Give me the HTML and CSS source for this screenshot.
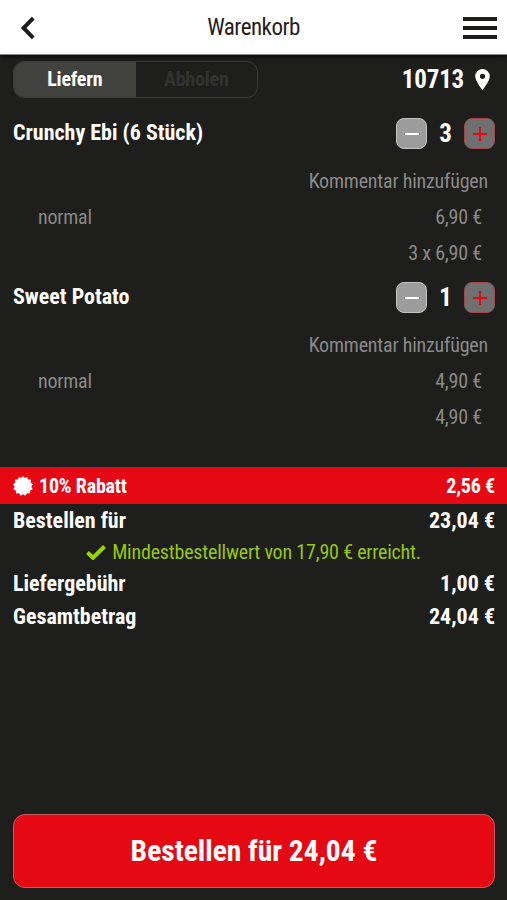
FILE: index.html
```html
<!DOCTYPE html>
<html lang="de">
<head>
  <meta charset="UTF-8" />
  <meta name="viewport" content="width=device-width, initial-scale=1" />
  <title>Warenkorb</title>
  <link rel="stylesheet" href="styles.css">
</head>
<body>
  <!-- Top bar -->
  <header class="topbar">
    <svg class="back" width="16" height="24" viewBox="0 0 16 24"><path d="M13.2 2.2 3.6 12l9.6 9.8" /></svg>
    <h1>Warenkorb</h1>
    <div class="menu"><span></span><span></span><span></span></div>
  </header>

  <main>
    <!-- Delivery / pickup switch -->
    <div class="row mode">
      <div class="switch">
        <span class="active">Liefern</span>
        <span>Abholen</span>
      </div>
      <div class="zip">
        10713
        <svg width="15" height="21" viewBox="0 0 15 21"><path fill-rule="evenodd" d="M7.5 0A7.3 7.3 0 0 0 .2 7.3C.2 12.500 7.500 21 7.500 21S14.800 12.500 14.800 7.300A7.300 7.300 0 0 0 7.500 0ZM7.500 4.700a2.600 2.600 0 1 1 0 5.200a2.600 2.600 0 1 1 0-5.200Z" /></svg>
      </div>
    </div>

    <!-- Cart items -->
    <section class="item">
      <div class="row item-head">
        <h2>Crunchy Ebi (6 Stück)</h2>
        <div class="stepper">
          <button class="minus"><svg width="14" height="14" viewBox="0 0 14 14"><path d="M0 7h14" /></svg></button>
          <span>3</span>
          <button class="plus"><svg width="14" height="14" viewBox="0 0 14 14"><path d="M0 7h14M7 0v14" /></svg></button>
        </div>
      </div>
      <p class="comment">Kommentar hinzufügen</p>
      <div class="row detail"><span>normal</span><span>6,90 €</span></div>
      <div class="row detail"><span></span><span>3 x 6,90 €</span></div>
    </section>

    <section class="item">
      <div class="row item-head">
        <h2>Sweet Potato</h2>
        <div class="stepper">
          <button class="minus"><svg width="14" height="14" viewBox="0 0 14 14"><path d="M0 7h14" /></svg></button>
          <span>1</span>
          <button class="plus"><svg width="14" height="14" viewBox="0 0 14 14"><path d="M0 7h14M7 0v14" /></svg></button>
        </div>
      </div>
      <p class="comment">Kommentar hinzufügen</p>
      <div class="row detail"><span>normal</span><span>4,90 €</span></div>
      <div class="row detail"><span></span><span>4,90 €</span></div>
    </section>

    <!-- Totals -->
    <div class="row discount">
      <span class="label">
        <svg width="20" height="20" viewBox="-10 -10 20 20"><path d="M0-10 1.700-8 4.300-9 5-6.500 8.200-6.200 7.500-3.500 10-1.700 8.300.7 9.700 3.300 7.300 4.500 6.700 7.500 4 7.200 2.200 9.800 0 8.200-2.200 9.800-4 7.200-6.700 7.500-7.300 4.500-9.700 3.300-8.300.7-10-1.700-7.500-3.500-8.200-6.200-5-6.500-4.300-9-1.700-8Z" /></svg>
        10% Rabatt
      </span>
      <span>2,56 €</span>
    </div>
    <div class="row total"><span>Bestellen für</span><span>23,04 €</span></div>
    <p class="minimum">
      <svg width="20" height="15" viewBox="0 0 20 15"><path d="M1.500 7.500 7 12.800 18.500 1.500" /></svg>
      Mindestbestellwert von 17,90 € erreicht.
    </p>
    <div class="row total"><span>Liefergebühr</span><span>1,00 €</span></div>
    <div class="row total"><span>Gesamtbetrag</span><span>24,04 €</span></div>
  </main>

  <footer>
    <button class="order">Bestellen für 24,04 €</button>
  </footer>
</body>
</html>
```
FILE: styles.css
```css
/* Base */
* {
  box-sizing: border-box;
}
body {
  margin: 0;
  height: 900px;
  display: flex;
  flex-direction: column;
  overflow: hidden;
  background: #1e1e1c;
  color: #fff;
  font-family: "Roboto Condensed", Roboto, sans-serif;
  font-stretch: 75%;
}
h1, h2, p {
  margin: 0;
}
button {
  padding: 0;
  font: inherit;
  color: inherit;
}
.row {
  display: flex;
  justify-content: space-between;
  align-items: center;
  padding: 0 12px 0 13px;
}

/* Top bar */
.topbar {
  height: 55px;
  flex-shrink: 0;
  display: grid;
  grid-template-columns: 50px 1fr 60px;
  align-items: center;
  padding: 1px 10px 0 20px;
  background: #fff;
  color: #1e1e1c;
  border-bottom: 1px solid #8c8c8c;
  box-shadow: 0 1px 4px #000;
}
.topbar h1 {
  font-size: 23px;
  font-weight: 400;
  letter-spacing: -0.5px;
  text-align: center;
}
.back {
  fill: none;
  stroke: #1e1e1c;
  stroke-width: 4;
}
.menu {
  width: 34px;
  display: grid;
  gap: 5px;
  justify-self: end;
}
.menu span {
  height: 4px;
  background: #1e1e1c;
}
main {
  flex: 1;
}

/* Delivery switch */
.mode {
  height: 48px;
}
.switch {
  width: 245px;
  height: 37px;
  display: grid;
  grid-template-columns: 1fr 1fr;
  border: 1px solid #3a3a38;
  border-radius: 11px;
  overflow: hidden;
  font-size: 20px;
  font-weight: 700;
  letter-spacing: -0.2px;
  line-height: 35px;
  text-align: center;
  color: #333331;
}
.switch .active {
  background: #41423d;
  color: #fff;
}
.zip {
  display: flex;
  align-items: center;
  gap: 11px;
  padding-right: 5px;
  font-size: 25px;
  font-weight: 700;
  letter-spacing: -0.2px;
}
.zip svg, .discount svg {
  fill: #fff;
}

/* Cart items */
.item {
  height: 164px;
}
.item-head {
  height: 60px;
}
.item h2 {
  font-size: 22px;
  line-height: 32px;
}
.stepper {
  display: grid;
  grid-template-columns: 31px 37px 31px;
  align-items: center;
  margin-top: 1px;
  text-align: center;
  font-size: 25px;
  font-weight: 700;
}
.stepper button {
  height: 31px;
  display: grid;
  place-items: center;
  border: 1px solid #c4c4c4;
  border-radius: 8px;
  background: #9c9c9c;
}
.stepper svg {
  stroke: #fff;
  stroke-width: 2;
}
.stepper .plus {
  border-color: #a8444c;
  background: #707070;
}
.stepper .plus svg {
  stroke: #e30613;
}
.comment, .detail {
  height: 36px;
  font-size: 20px;
  letter-spacing: -0.2px;
  line-height: 36px;
  color: #8a8a88;
}
.comment {
  padding-right: 19px;
  text-align: right;
}
.detail {
  padding: 0 25px 0 38px;
}

/* Totals */
.discount {
  height: 37px;
  margin-top: 36px;
  background: #e50914;
  font-size: 20px;
  font-weight: 700;
  letter-spacing: -0.2px;
}
.discount .label {
  display: flex;
  align-items: center;
  gap: 6px;
}
.total {
  height: 33px;
  font-size: 22px;
  font-weight: 700;
}
.minimum {
  height: 30px;
  display: flex;
  align-items: center;
  justify-content: center;
  gap: 6px;
  font-size: 20px;
  letter-spacing: -0.2px;
  color: #97c80e;
}
.minimum svg {
  fill: none;
  stroke: #97d700;
  stroke-width: 4;
}

/* Order button */
footer {
  padding: 0 12px 12px 13px;
}
.order {
  width: 100%;
  height: 74px;
  display: block;
  background: #e50914;
  border: 1px solid #c65c5c;
  border-radius: 12px;
  font-size: 29.5px;
  font-weight: 700;
}
```
